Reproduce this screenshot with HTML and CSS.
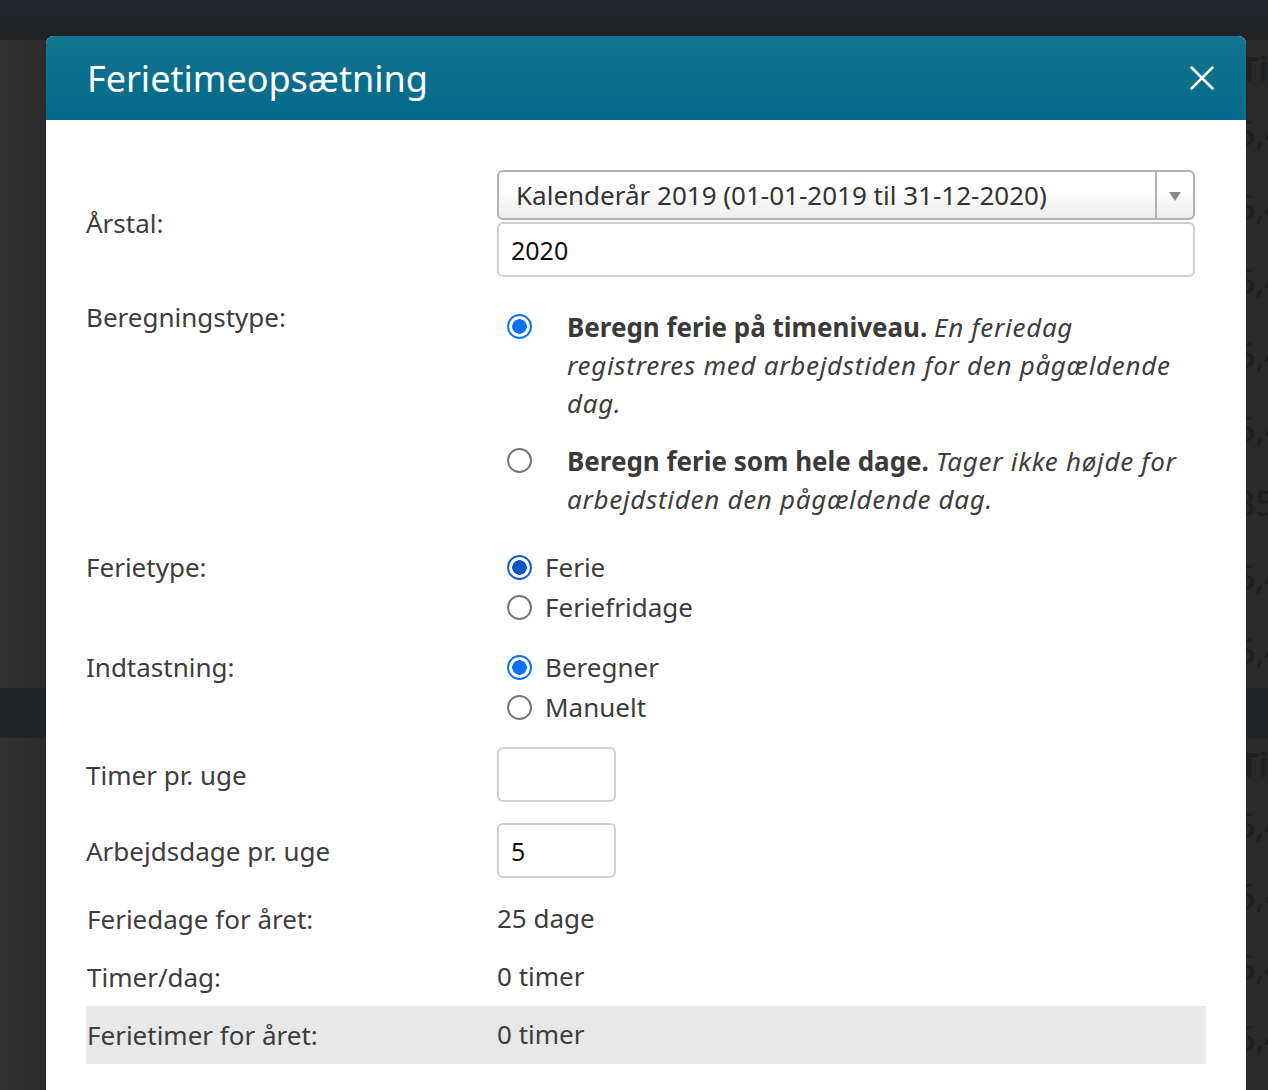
FILE: index.html
```html
<!DOCTYPE html>
<html lang="da">
<head>
    <meta charset="UTF-8">
    <meta name="viewport" content="width=device-width, initial-scale=1.0">
    <title>Ferietimeopsætning</title>
    <link rel="stylesheet" href="styles.css">
</head>
<body>
    <div class="page">
        <div class="topbar"></div>
        <div class="bg-head">Tir</div>
        <div class="bg-row">35,4</div>
        <div class="bg-row">35,4</div>
        <div class="bg-row">35,4</div>
        <div class="bg-row">35,4</div>
        <div class="bg-row">35,4</div>
        <div class="bg-row">35,</div>
        <div class="bg-row">35,4</div>
        <div class="bg-row">35,4</div>
        <div class="bg-band"></div>
        <div class="bg-head">Tir</div>
        <div class="bg-row short">35,4</div>
        <div class="bg-row short">35,4</div>
        <div class="bg-row short">35,4</div>
        <div class="bg-row short">35,4</div>
    </div>

    <div class="modal">
        <div class="modal-header">
            <h1>Ferietimeopsætning</h1>
            <button class="close" aria-label="Luk">
                <svg width="24" height="24" viewBox="0 0 24 24">
                    <path d="M1.5 1.5 L22.5 22.5 M22.5 1.5 L1.5 22.5" stroke="#fff" stroke-width="2.5" stroke-linecap="round"/>
                </svg>
            </button>
        </div>
        <div class="modal-body">
            <div class="row row-year">
                <label class="label">Årstal:</label>
                <div class="value">
                    <div class="select">
                        <span>Kalenderår 2019 (01-01-2019 til 31-12-2020)</span>
                        <span class="select-arrow"></span>
                    </div>
                    <input class="input input-wide" type="text" value="2020">
                </div>
            </div>

            <div class="row row-calc">
                <div class="label">Beregningstype:</div>
                <div class="value calc-options">
                    <label class="calc-option">
                        <input type="radio" name="calc" checked>
                        <span><b>Beregn ferie på timeniveau.</b> <i>En feriedag<br>registreres med arbejdstiden for den pågældende<br>dag.</i></span>
                    </label>
                    <label class="calc-option">
                        <input type="radio" name="calc">
                        <span><b>Beregn ferie som hele dage.</b> <i>Tager ikke højde for<br>arbejdstiden den pågældende dag.</i></span>
                    </label>
                </div>
            </div>

            <div class="row row-radios">
                <div class="label">Ferietype:</div>
                <div class="value">
                    <label class="option"><input type="radio" name="type" class="dark" checked> Ferie</label>
                    <label class="option"><input type="radio" name="type"> Feriefridage</label>
                </div>
            </div>

            <div class="row row-radios">
                <div class="label">Indtastning:</div>
                <div class="value">
                    <label class="option"><input type="radio" name="entry" checked> Beregner</label>
                    <label class="option"><input type="radio" name="entry"> Manuelt</label>
                </div>
            </div>

            <div class="row row-input">
                <label class="label">Timer pr. uge</label>
                <div class="value"><input class="input input-small" type="text" value=""></div>
            </div>

            <div class="row row-input">
                <label class="label">Arbejdsdage pr. uge</label>
                <div class="value"><input class="input input-small" type="text" value="5"></div>
            </div>

            <div class="summary">
                <div class="summary-row">
                    <div class="label">Feriedage for året:</div>
                    <div class="value">25 dage</div>
                </div>
                <div class="summary-row">
                    <div class="label">Timer/dag:</div>
                    <div class="value">0 timer</div>
                </div>
                <div class="summary-row shaded">
                    <div class="label">Ferietimer for året:</div>
                    <div class="value">0 timer</div>
                </div>
            </div>
        </div>
    </div>
</body>
</html>
```

FILE: styles.css
```css
body {
    margin: 0;
    height: 1090px;
    overflow: hidden;
    background: linear-gradient(to right, #333333, #282828 60px, #2a2a2a);
    font-family: "Noto Sans", Lato, sans-serif;
    color: #3d3d3d;
}
.page {
    display: flex;
    flex-direction: column;
}
.topbar {
    height: 40px;
    background: linear-gradient(#23272b, #1f2225);
}
.bg-head,
.bg-row {
    height: 74px;
    line-height: 74px;
    text-align: right;
    margin-right: -16px;
    font-size: 34px;
    color: #202020;
}
.bg-head {
    font-weight: bold;
    height: 56px;
    line-height: 56px;
}
.bg-band + .bg-head {
    height: 52px;
    line-height: 52px;
}
.bg-row.short {
    height: 71px;
    line-height: 71px;
}
.bg-band {
    height: 50px;
    background: #212528;
}

.modal {
    position: absolute;
    top: 36px;
    left: 46px;
    width: 1200px;
    height: 1100px;
    background: #fff;
    border-radius: 8px 8px 0 0;
    overflow: hidden;
}
.modal-header {
    height: 84px;
    display: flex;
    align-items: center;
    justify-content: space-between;
    padding: 0 32px 0 41px;
    background: linear-gradient(#14738f, #036a8a);
}
.modal-header h1 {
    margin: 0;
    font-size: 36px;
    font-weight: normal;
    color: #fff;
}
.close {
    background: none;
    border: 0;
    padding: 0;
    width: 24px;
    height: 24px;
    cursor: pointer;
}
.modal-body {
    padding: 50px 40px 0 40px;
    font-size: 26px;
}

.row {
    display: grid;
    grid-template-columns: 411px 1fr;
}
.label {
    line-height: 38px;
}
.row-year {
    align-items: center;
    margin-bottom: 21px;
}
.row-year .label {
    margin-top: -2px;
}
.select {
    width: 698px;
    height: 50px;
    box-sizing: border-box;
    display: flex;
    align-items: center;
    justify-content: space-between;
    padding-left: 17px;
    border: 2px solid #b3b3b3;
    border-radius: 6px;
    background: linear-gradient(#ffffff 40%, #ececec);
    font-size: 26px;
    color: #333;
}
.select-arrow {
    width: 36px;
    height: 100%;
    border-left: 2px solid #b3b3b3;
    position: relative;
}
.select-arrow::after {
    content: "";
    position: absolute;
    left: 12px;
    top: 20px;
    border-left: 6px solid transparent;
    border-right: 6px solid transparent;
    border-top: 9px solid #8a8a8a;
}
.input {
    display: block;
    box-sizing: border-box;
    height: 55px;
    border: 2px solid #cfcfcf;
    border-radius: 6px;
    padding: 0 12px;
    font-family: "Noto Sans", Lato, sans-serif;
    font-size: 25px;
    color: #111;
    background: #fff;
}
.input-wide {
    width: 698px;
    margin-top: 2px;
}
.input-small {
    width: 119px;
}

input[type="radio"] {
    appearance: none;
    -webkit-appearance: none;
    margin: 0;
    width: 25px;
    height: 25px;
    flex: none;
    border: 2px solid #767676;
    border-radius: 50%;
    background: #fff;
}
input[type="radio"]:checked {
    border: 2.5px solid #0b72f5;
    background: radial-gradient(circle, #0b72f5 0 7px, #fff 7.5px);
}
input[type="radio"].dark:checked {
    border-color: #0c5fd0;
    background: radial-gradient(circle, #0a56c4 0 7px, #fff 7.5px);
}

.row-calc {
    margin-bottom: 29px;
}
.calc-options {
    padding-top: 10px;
    display: flex;
    flex-direction: column;
    gap: 20px;
}
.calc-option {
    display: flex;
    align-items: flex-start;
    gap: 35px;
    padding-left: 10px;
    line-height: 38px;
    white-space: nowrap;
}
.calc-option input {
    margin-top: 6px;
}
.calc-option b {
    color: #3a3a3a;
}
.calc-option i {
    letter-spacing: 0.7px;
}

.row-radios {
    margin-bottom: 20px;
}
.option {
    display: flex;
    align-items: center;
    gap: 13px;
    padding-left: 10px;
    height: 40px;
}
.row-radios .label {
    margin-top: 1px;
}

.row-input {
    align-items: center;
    margin-bottom: 21px;
}
.row-input + .row-input {
    margin-bottom: 12px;
}

.summary-row {
    display: grid;
    grid-template-columns: 410px 1fr;
    padding: 10px 0 10px 1px;
}
.shaded {
    background: #e8e8e8;
}
```
